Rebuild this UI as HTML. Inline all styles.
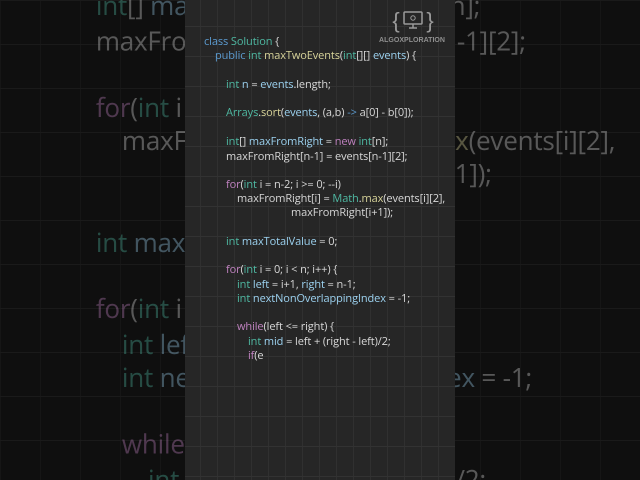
<!DOCTYPE html>
<html style="overflow:hidden;width:640px;height:480px"><head><meta charset="utf-8"><style>
*{margin:0;padding:0;box-sizing:border-box}
body{width:640px;height:480px;overflow:hidden;background:#0f0f0f;position:relative;font-family:"Open Sans","Liberation Sans","DejaVu Sans",sans-serif}
.bggrid{position:absolute;inset:0;background-image:linear-gradient(#1a1a1a 1px,transparent 1px),linear-gradient(90deg,#161616 1px,transparent 1px);background-size:40px 44px,40px 40px}
.wrap{position:absolute;left:0;top:0;width:640px;height:480px;overflow:hidden}
.code{position:absolute;left:0;top:0;width:640px;height:480px;font-size:11px;color:#d8d8d8;white-space:pre;letter-spacing:-0.1px}
.code div{position:absolute;line-height:14px}
.big{transform-origin:321px 240px;transform:scale(2.37);opacity:.36}
.panel{position:absolute;left:185px;top:0;width:270px;height:480px;background-color:#262626;background-image:linear-gradient(#323232 1px,transparent 1px),linear-gradient(90deg,#303030 1px,transparent 1px);background-size:17px 30px;background-position:0 26px,15px 0;overflow:hidden}
.k{color:#5c9bd0}.t{color:#4fb9a3}.f{color:#d8d49a}.p{color:#c082c0}.v{color:#9cd2f0}
.logo{position:absolute;left:376px;top:6px;width:72px;height:40px}
</style></head><body>
<div class="wrap">
<div class="bggrid"></div>
<div class="code big">
<div style="left:204px;top:35px"><span class="k">class</span> <span class="t">Solution</span> {</div>
<div style="left:215px;top:49px"><span class="k">public</span> <span class="t">int</span> <span class="f">maxTwoEvents</span>(<span class="t">int</span>[][] <span class="v">events</span>) {</div>
<div style="left:226px;top:78px"><span class="t">int</span> <span class="v">n</span> = <span class="v">events</span>.length;</div>
<div style="left:226px;top:106px"><span class="t">Arrays</span>.<span class="f">sort</span>(<span class="v">events</span>, (a,b) <span class="k">-&gt;</span> a[0] - b[0]);</div>
<div style="left:226px;top:135px"><span class="t">int</span>[] <span class="v">maxFromRight</span> = <span class="p">new</span> <span class="t">int</span>[n];</div>
<div style="left:226px;top:150px">maxFromRight[n-1] = events[n-1][2];</div>
<div style="left:226px;top:178px"><span class="p">for</span>(<span class="t">int</span> i = n-2; i &gt;= 0; --i)</div>
<div style="left:237px;top:192px">maxFromRight[i] = <span class="t">Math</span>.<span class="f">max</span>(events[i][2],</div>
<div style="left:291px;top:206px">maxFromRight[i+1]);</div>
<div style="left:226px;top:235px"><span class="t">int</span> <span class="v">maxTotalValue</span> = 0;</div>
<div style="left:226px;top:263px"><span class="p">for</span>(<span class="t">int</span> i = 0; i &lt; n; i++) {</div>
<div style="left:237px;top:278px"><span class="t">int</span> <span class="v">left</span> = i+1, <span class="v">right</span> = n-1;</div>
<div style="left:237px;top:292px"><span class="t">int</span> <span class="v">nextNonOverlappingIndex</span> = -1;</div>
<div style="left:237px;top:320px"><span class="p">while</span>(left &lt;= right) {</div>
<div style="left:248px;top:335px"><span class="t">int</span> <span class="v">mid</span> = left + (right - left)/2;</div>
<div style="left:248px;top:349px"><span class="p">if</span>(e</div>
</div>
<div class="panel"></div>
<div class="code">
<div style="left:204px;top:35px"><span class="k">class</span> <span class="t">Solution</span> {</div>
<div style="left:215px;top:49px"><span class="k">public</span> <span class="t">int</span> <span class="f">maxTwoEvents</span>(<span class="t">int</span>[][] <span class="v">events</span>) {</div>
<div style="left:226px;top:78px"><span class="t">int</span> <span class="v">n</span> = <span class="v">events</span>.length;</div>
<div style="left:226px;top:106px"><span class="t">Arrays</span>.<span class="f">sort</span>(<span class="v">events</span>, (a,b) <span class="k">-&gt;</span> a[0] - b[0]);</div>
<div style="left:226px;top:135px"><span class="t">int</span>[] <span class="v">maxFromRight</span> = <span class="p">new</span> <span class="t">int</span>[n];</div>
<div style="left:226px;top:150px">maxFromRight[n-1] = events[n-1][2];</div>
<div style="left:226px;top:178px"><span class="p">for</span>(<span class="t">int</span> i = n-2; i &gt;= 0; --i)</div>
<div style="left:237px;top:192px">maxFromRight[i] = <span class="t">Math</span>.<span class="f">max</span>(events[i][2],</div>
<div style="left:291px;top:206px">maxFromRight[i+1]);</div>
<div style="left:226px;top:235px"><span class="t">int</span> <span class="v">maxTotalValue</span> = 0;</div>
<div style="left:226px;top:263px"><span class="p">for</span>(<span class="t">int</span> i = 0; i &lt; n; i++) {</div>
<div style="left:237px;top:278px"><span class="t">int</span> <span class="v">left</span> = i+1, <span class="v">right</span> = n-1;</div>
<div style="left:237px;top:292px"><span class="t">int</span> <span class="v">nextNonOverlappingIndex</span> = -1;</div>
<div style="left:237px;top:320px"><span class="p">while</span>(left &lt;= right) {</div>
<div style="left:248px;top:335px"><span class="t">int</span> <span class="v">mid</span> = left + (right - left)/2;</div>
<div style="left:248px;top:349px"><span class="p">if</span>(e</div>
</div>
<svg class="logo" viewBox="0 0 72 40">
<text x="20" y="22" font-size="22" fill="#9a9a9a" font-family="Liberation Sans" text-anchor="middle">{</text>
<text x="54" y="22" font-size="22" fill="#9a9a9a" font-family="Liberation Sans" text-anchor="middle">}</text>
<rect x="28" y="6" width="18" height="12" rx="1" fill="none" stroke="#9a9a9a" stroke-width="1.5"/>
<path d="M33 22h8M37 18v4" stroke="#9a9a9a" stroke-width="1.5"/>
<circle cx="37" cy="12" r="2.2" fill="none" stroke="#9a9a9a" stroke-width="1"/>
<text x="3" y="36" font-size="7" fill="#8f8f8f" font-family="Liberation Sans" font-weight="bold" textLength="66" lengthAdjust="spacingAndGlyphs">ALGOXPLORATION</text>
</svg>
</div>
</body></html>
